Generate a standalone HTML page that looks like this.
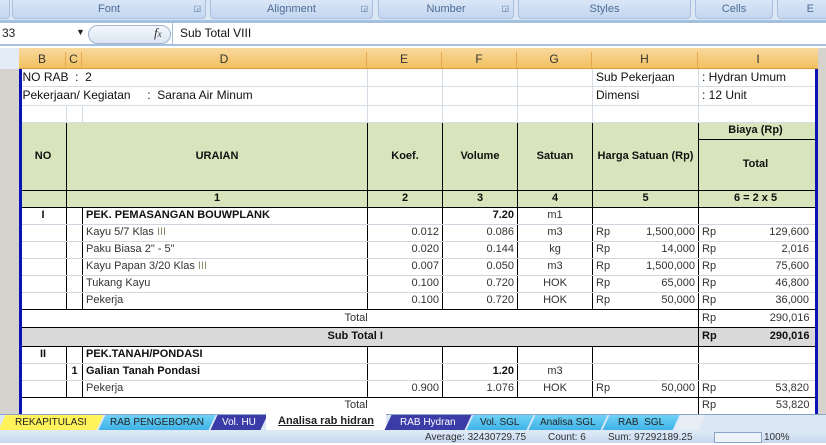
<!DOCTYPE html>
<html><head><meta charset="utf-8"><style>
*{margin:0;padding:0;box-sizing:border-box}
body{width:826px;height:443px;overflow:hidden;background:#fff;font-family:"Liberation Sans",sans-serif;font-size:11px;color:#222;position:relative}
.abs{position:absolute}
.grp{position:absolute;top:0;height:19px;background:linear-gradient(#d9e6f6,#c3d7f0);border:1px solid #a9c0de;border-top:none;border-radius:0 0 4px 4px;color:#4d6b95;font-size:11px;text-align:center;line-height:18px}
table{position:absolute;left:19px;top:69px;border-collapse:collapse;table-layout:fixed}
td{height:17px;padding:0 3px;white-space:nowrap;overflow:hidden;font-size:11px;line-height:15px;color:#333}
.g{border-bottom:1px solid #d6dce6;border-right:1px solid #d6dce6}
.v{border-left:1px solid #000;border-right:1px solid #000;border-bottom:1px solid #d0d6e0}
.hd{background:#d8e4bc;border:1px solid #000;text-align:center;font-weight:bold;color:#111}
.b{font-weight:bold;color:#111}
.r{text-align:right}.c{text-align:center}
.rp{display:flex;justify-content:space-between}
td:last-child{padding-right:6px}
</style></head><body>
<div class="abs" style="left:0;top:0;width:826px;height:21px;background:#dbe7f5"></div>
<div class="grp" style="left:-20px;width:30px"></div>
<div class="grp" style="left:12px;width:194px">Font<span style="position:absolute;right:4px;font-size:8px">◲</span></div>
<div class="grp" style="left:210px;width:163px">Alignment<span style="position:absolute;right:4px;font-size:8px">◲</span></div>
<div class="grp" style="left:378px;width:136px">Number<span style="position:absolute;right:4px;font-size:8px">◲</span></div>
<div class="grp" style="left:518px;width:173px">Styles</div>
<div class="grp" style="left:695px;width:78px">Cells</div>
<div class="grp" style="left:777px;width:60px;text-align:right;padding-right:22px">E</div>
<div class="abs" style="left:0;top:20px;width:826px;height:3px;background:#a5bfdf"></div>
<div class="abs" style="left:0;top:23px;width:826px;height:23px;background:#fff;border-bottom:2px solid #a5bfdf"></div>
<div class="abs" style="left:2px;top:26px;font-size:12px">33</div>
<div class="abs" style="left:76px;top:27px;font-size:9px">▼</div>
<div class="abs" style="left:88px;top:25px;width:83px;height:19px;border:1px solid #a0b4cf;border-radius:10px;background:linear-gradient(#f4f8fc,#dbe6f3)"></div>
<div class="abs" style="left:154px;top:25px;font-family:'Liberation Serif',serif;font-style:italic;font-size:13px;color:#333">f<span style="font-size:9px">x</span></div>
<div class="abs" style="left:172px;top:23px;width:1px;height:22px;background:#a5bfdf"></div>
<div class="abs" style="left:180px;top:26px;font-size:12px;color:#111">Sub Total VIII</div>
<div class="abs" style="left:0;top:48px;width:826px;height:21px;background:#e4ecf7"></div>
<div class="abs" style="left:19px;top:48px;width:799px;height:21px;background:linear-gradient(#f9d99f,#f1c15f);border-bottom:1px solid #d99a3c"></div>
<div class="abs" style="left:0;top:69px;width:19px;height:345px;background:#d6d3ce"></div>
<div class="abs" style="left:818px;top:48px;width:8px;height:366px;background:#d6d3ce"></div>
<div class="abs" style="top:52px;left:19px;width:799px;height:16px;font-size:12px;color:#333">
<span class="abs" style="left:0;width:47px;text-align:center;border-right:1px solid #e5a750;height:16px">B</span>
<span class="abs" style="left:47px;width:16px;text-align:center;border-right:1px solid #e5a750;height:16px">C</span>
<span class="abs" style="left:63px;width:285px;text-align:center;border-right:1px solid #e5a750;height:16px">D</span>
<span class="abs" style="left:348px;width:75px;text-align:center;border-right:1px solid #e5a750;height:16px">E</span>
<span class="abs" style="left:423px;width:75px;text-align:center;border-right:1px solid #e5a750;height:16px">F</span>
<span class="abs" style="left:498px;width:75px;text-align:center;border-right:1px solid #e5a750;height:16px">G</span>
<span class="abs" style="left:573px;width:106px;text-align:center;border-right:1px solid #e5a750;height:16px">H</span>
<span class="abs" style="left:679px;width:120px;text-align:center">I</span>
</div>
<table>
<colgroup><col style="width:47px"><col style="width:16px"><col style="width:285px"><col style="width:75px"><col style="width:75px"><col style="width:75px"><col style="width:106px"><col style="width:117px"></colgroup>
<tr><td colspan="3" class="g" style="font-size:12px;color:#111">NO RAB&nbsp; :&nbsp; 2</td><td class="g"></td><td class="g"></td><td class="g"></td><td class="g" style="font-size:12px;color:#111">Sub Pekerjaan</td><td class="g" style="font-size:12px;color:#111">: Hydran Umum</td></tr>
<tr><td colspan="3" class="g" style="font-size:12px;color:#111;height:19px">Pekerjaan/ Kegiatan &nbsp; &nbsp; :&nbsp; Sarana Air Minum</td><td class="g"></td><td class="g"></td><td class="g"></td><td class="g" style="font-size:12px;color:#111">Dimensi</td><td class="g" style="font-size:12px;color:#111">: 12 Unit</td></tr>
<tr><td class="g"></td><td class="g"></td><td class="g"></td><td class="g"></td><td class="g"></td><td class="g"></td><td class="g"></td><td class="g"></td></tr>
<tr><td class="hd" rowspan="2">NO</td><td class="hd" colspan="2" rowspan="2">URAIAN</td><td class="hd" rowspan="2">Koef.</td><td class="hd" rowspan="2">Volume</td><td class="hd" rowspan="2">Satuan</td><td class="hd" rowspan="2">Harga Satuan (Rp)</td><td class="hd">Biaya (Rp)</td></tr>
<tr><td class="hd" style="height:51px">Total</td></tr>
<tr><td class="hd"></td><td class="hd" colspan="2">1</td><td class="hd">2</td><td class="hd">3</td><td class="hd">4</td><td class="hd">5</td><td class="hd">6 = 2 x 5</td></tr>
<tr><td class="v c b">I</td><td class="v"></td><td class="v b">PEK. PEMASANGAN BOUWPLANK</td><td class="v"></td><td class="v r b">7.20</td><td class="v c">m1</td><td class="v"></td><td class="v"></td></tr>
<tr><td class="v"></td><td class="v"></td><td class="v">Kayu 5/7 Klas <span style="color:#8a8a6a">III</span></td><td class="v r">0.012</td><td class="v r">0.086</td><td class="v c">m3</td><td class="v"><div class="rp"><span>Rp</span><span>1,500,000</span></div></td><td class="v"><div class="rp"><span>Rp</span><span>129,600</span></div></td></tr>
<tr><td class="v"></td><td class="v"></td><td class="v">Paku Biasa 2" - 5"</td><td class="v r">0.020</td><td class="v r">0.144</td><td class="v c">kg</td><td class="v"><div class="rp"><span>Rp</span><span>14,000</span></div></td><td class="v"><div class="rp"><span>Rp</span><span>2,016</span></div></td></tr>
<tr><td class="v"></td><td class="v"></td><td class="v">Kayu Papan 3/20 Klas <span style="color:#8a8a6a">III</span></td><td class="v r">0.007</td><td class="v r">0.050</td><td class="v c">m3</td><td class="v"><div class="rp"><span>Rp</span><span>1,500,000</span></div></td><td class="v"><div class="rp"><span>Rp</span><span>75,600</span></div></td></tr>
<tr><td class="v"></td><td class="v"></td><td class="v">Tukang Kayu</td><td class="v r">0.100</td><td class="v r">0.720</td><td class="v c">HOK</td><td class="v"><div class="rp"><span>Rp</span><span>65,000</span></div></td><td class="v"><div class="rp"><span>Rp</span><span>46,800</span></div></td></tr>
<tr><td class="v" style="border-bottom:1px solid #000"></td><td class="v" style="border-bottom:1px solid #000"></td><td class="v" style="border-bottom:1px solid #000">Pekerja</td><td class="v r" style="border-bottom:1px solid #000">0.100</td><td class="v r" style="border-bottom:1px solid #000">0.720</td><td class="v c" style="border-bottom:1px solid #000">HOK</td><td class="v" style="border-bottom:1px solid #000"><div class="rp"><span>Rp</span><span>50,000</span></div></td><td class="v" style="border-bottom:1px solid #000"><div class="rp"><span>Rp</span><span>36,000</span></div></td></tr>
<tr><td colspan="7" style="height:18px;text-align:left;padding-left:325px;border-bottom:1px solid #000">Total</td><td style="border-left:1px solid #000;border-bottom:1px solid #000"><div class="rp"><span>Rp</span><span>290,016</span></div></td></tr>
<tr><td colspan="7" class="b" style="height:19px;background:#d9d9d9;padding-left:308px;border-bottom:1px solid #000">Sub Total I</td><td class="b" style="background:#d9d9d9;border-left:1px solid #000;border-bottom:1px solid #000"><div class="rp"><span>Rp</span><span>290,016</span></div></td></tr>
<tr><td class="v c b">II</td><td class="v"></td><td class="v b">PEK.TANAH/PONDASI</td><td class="v"></td><td class="v"></td><td class="v"></td><td class="v"></td><td class="v"></td></tr>
<tr><td class="v"></td><td class="v c b">1</td><td class="v b">Galian Tanah Pondasi</td><td class="v"></td><td class="v r b">1.20</td><td class="v c">m3</td><td class="v"></td><td class="v"></td></tr>
<tr><td class="v" style="border-bottom:1px solid #000"></td><td class="v" style="border-bottom:1px solid #000"></td><td class="v" style="border-bottom:1px solid #000">Pekerja</td><td class="v r" style="border-bottom:1px solid #000">0.900</td><td class="v r" style="border-bottom:1px solid #000">1.076</td><td class="v c" style="border-bottom:1px solid #000">HOK</td><td class="v" style="border-bottom:1px solid #000"><div class="rp"><span>Rp</span><span>50,000</span></div></td><td class="v" style="border-bottom:1px solid #000"><div class="rp"><span>Rp</span><span>53,820</span></div></td></tr>
<tr><td colspan="7" style="padding-left:325px">Total</td><td style="border-left:1px solid #000"><div class="rp"><span>Rp</span><span>53,820</span></div></td></tr>
</table>
<div class="abs" style="left:19px;top:69px;width:3px;height:345px;background:#0a14b4"></div>
<div class="abs" style="left:815px;top:69px;width:3px;height:345px;background:#0a14b4"></div>
<div class="abs" style="left:0;top:414px;width:826px;height:17px;background:#dbe7f5;border-top:1px solid #8aa5c8"></div>
<div class="abs" style="left:2px;top:415px;width:98px;height:15px;background:#fff25a;font-size:10px;text-align:center;line-height:15px;transform:skewX(-25deg)"><span style="display:inline-block;transform:skewX(25deg)">REKAPITULASI</span></div>
<div class="abs" style="left:102px;top:415px;width:110px;height:15px;background:linear-gradient(#6fd2f5,#3eb2e8);font-size:10px;text-align:center;line-height:15px;transform:skewX(-25deg)"><span style="display:inline-block;transform:skewX(25deg)">RAB PENGEBORAN</span></div>
<div class="abs" style="left:214px;top:415px;width:50px;height:15px;background:#3c3ca8;color:#fff;font-size:10px;text-align:center;line-height:15px;transform:skewX(-25deg)"><span style="display:inline-block;transform:skewX(25deg)">Vol. HU</span></div>
<div class="abs" style="left:266px;top:414px;width:120px;height:16px;background:#fff;font-size:11px;font-weight:bold;text-align:center;line-height:15px;text-decoration:underline">Analisa rab hidran</div>
<div class="abs" style="left:388px;top:415px;width:80px;height:15px;background:#3c3ca8;color:#fff;font-size:10px;text-align:center;line-height:15px;transform:skewX(-25deg)"><span style="display:inline-block;transform:skewX(25deg)">RAB Hydran</span></div>
<div class="abs" style="left:470px;top:415px;width:60px;height:15px;background:linear-gradient(#6fd2f5,#3eb2e8);font-size:10px;text-align:center;line-height:15px;transform:skewX(-25deg)"><span style="display:inline-block;transform:skewX(25deg)">Vol. SGL</span></div>
<div class="abs" style="left:532px;top:415px;width:72px;height:15px;background:linear-gradient(#6fd2f5,#3eb2e8);font-size:10px;text-align:center;line-height:15px;transform:skewX(-25deg)"><span style="display:inline-block;transform:skewX(25deg)">Analisa SGL</span></div>
<div class="abs" style="left:606px;top:415px;width:70px;height:15px;background:linear-gradient(#6fd2f5,#3eb2e8);font-size:10px;text-align:center;line-height:15px;transform:skewX(-25deg)"><span style="display:inline-block;transform:skewX(25deg)">RAB&nbsp; SGL</span></div>
<div class="abs" style="left:678px;top:415px;width:24px;height:15px;background:#e8eef6;transform:skewX(-25deg)"></div>
<div class="abs" style="left:0;top:431px;width:826px;height:12px;background:linear-gradient(#dfeaf7,#c6d8ef);font-size:10px;color:#333;line-height:14px">
<span class="abs" style="left:425px">Average: 32430729.75</span>
<span class="abs" style="left:548px">Count: 6</span>
<span class="abs" style="left:608px">Sum: 97292189.25</span>
<span class="abs" style="left:714px;top:1px;width:48px;height:11px;border:1px solid #8aa5c8;background:#eef3fa"></span>
<span class="abs" style="left:764px">100%</span>
</div>
</body></html>
